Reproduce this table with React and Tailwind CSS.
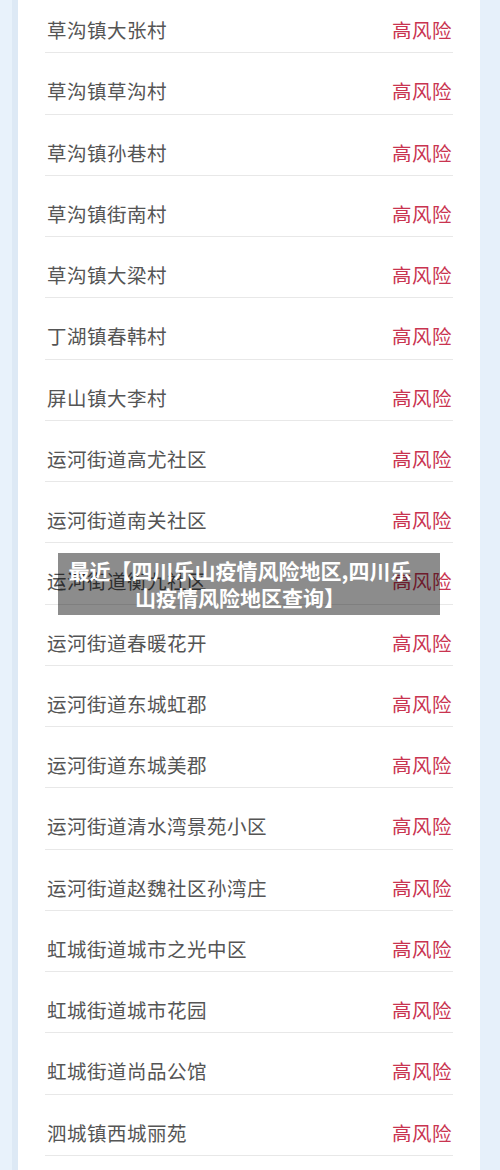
import React from "react";

const rows = [
  "草沟镇大张村",
  "草沟镇草沟村",
  "草沟镇孙巷村",
  "草沟镇街南村",
  "草沟镇大梁村",
  "丁湖镇春韩村",
  "屏山镇大李村",
  "运河街道高尤社区",
  "运河街道南关社区",
  "运河街道衡九社区",
  "运河街道春暖花开",
  "运河街道东城虹郡",
  "运河街道东城美郡",
  "运河街道清水湾景苑小区",
  "运河街道赵魏社区孙湾庄",
  "虹城街道城市之光中区",
  "虹城街道城市花园",
  "虹城街道尚品公馆",
  "泗城镇西城丽苑",
];

export default function App() {
  return (
    <div
      className="relative w-[500px] h-[1170px] overflow-hidden bg-[#e6f0fa] flex"
      style={{ fontFamily: '"Noto Sans CJK SC", "Noto Sans", sans-serif' }}
    >
      {/* left edge strip */}
      <div className="w-[18px] flex shrink-0">
        <div className="w-[12px] bg-[#e8f2fb]" />
        <div className="w-[6px] bg-[#dde9f5]" />
      </div>

      {/* CARD */}
      <div className="w-[462px] bg-white px-[27px]">
        <div className="-mt-[8px]">
          {rows.map((name, i) => (
            <div
              key={i}
              className="h-[61.25px] pt-[15px] flex items-center justify-between border-b border-[#e8e8e8] pl-[2px] pr-[1px]"
            >
              <span className="text-[19.5px] text-[#555] leading-[25px] tracking-[0.5px]">{name}</span>
              <span className="text-[19.5px] text-[#c93450] leading-[25px] tracking-[0.5px]">高风险</span>
            </div>
          ))}
        </div>
      </div>

      {/* TITLE OVERLAY */}
      <div className="absolute left-[58px] top-[553px] w-[382px] h-[62px] bg-black/45 flex items-center justify-center pr-[18px]">
        <p className="text-white font-bold text-[21px] leading-[27px] text-center whitespace-nowrap">
          最近【四川乐山疫情风险地区,四川乐
          <br />
          山疫情风险地区查询】
        </p>
      </div>
    </div>
  );
}
